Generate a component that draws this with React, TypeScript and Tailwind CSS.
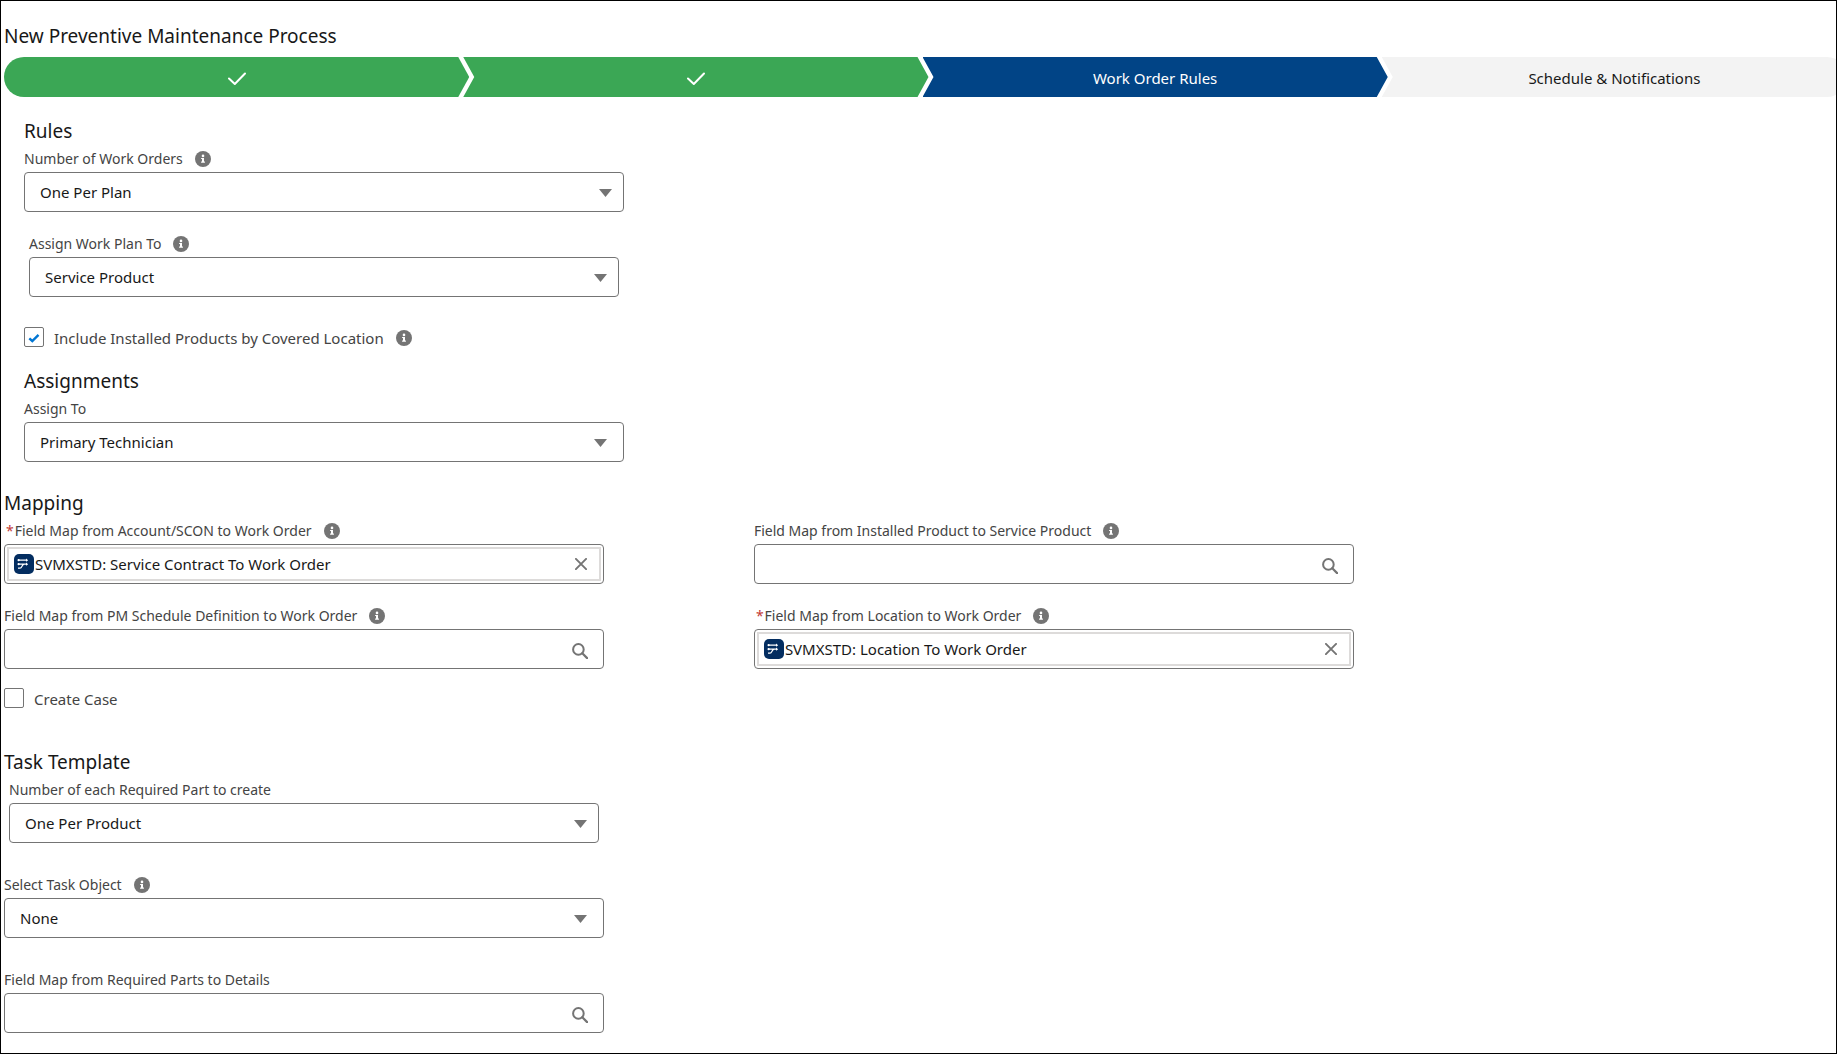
import { useId, useState } from "react";
import type { ReactNode } from "react";

const InfoIcon = () => (
  <svg viewBox="0 0 16 16" className="size-4 text-[#747474]" aria-hidden="true">
    <circle cx="8" cy="8" r="8" fill="currentColor" />
    <circle cx="8" cy="4.9" r="1.3" fill="#fff" />
    <path d="M6.1 6.9h2.9v3.6h.9v1.3H6.1v-1.3H7V8.1h-.9z" fill="#fff" />
  </svg>
);

const CheckIcon = () => (
  <svg viewBox="0 0 18 14" className="mt-0.5 h-3.5 w-[18px]" aria-hidden="true">
    <path d="M1 6.5 6.8 12 17 1.5" fill="none" stroke="#fff" strokeWidth="2" strokeLinecap="round" strokeLinejoin="round" />
  </svg>
);

const SearchIcon = () => (
  <svg viewBox="0 0 16 16" className="size-4" aria-hidden="true">
    <circle cx="6.4" cy="6.4" r="5.3" fill="none" stroke="#747474" strokeWidth="2" />
    <path d="m10.3 10.3 4.8 4.8" stroke="#747474" strokeWidth="2.2" strokeLinecap="round" />
  </svg>
);

const CloseIcon = () => (
  <svg viewBox="0 0 12 12" className="size-3" aria-hidden="true">
    <path d="m.9.9 10.2 10.2M11.1.9.9 11.1" stroke="#747474" strokeWidth="1.9" strokeLinecap="round" />
  </svg>
);

const FieldMapIcon = () => (
  <svg viewBox="0 0 20 20" className="size-5 shrink-0" aria-hidden="true">
    <rect width="20" height="20" rx="5" fill="#032d60" />
    <path d="M4 6.2h9M4 10.2h9M4 14.2h2c2.4 0 1.6-4 4.4-4" fill="none" stroke="#fff" strokeWidth="1.2" />
    <path d="m12 4.6 2.2 1.6L12 7.8zM12 8.6l2.2 1.6-2.2 1.6z" fill="#fff" />
    <circle cx="4.6" cy="6.2" r="1.1" fill="#fff" />
    <circle cx="4.6" cy="10.2" r="1.1" fill="#fff" />
  </svg>
);

// Each step overlaps the previous one by 6px, which leaves a 5px gap between the chevrons
const steps = [
  {
    label: "Process Details",
    done: true,
    className: "rounded-l-full bg-[#3ba755] [clip-path:polygon(0_0,calc(100%-11px)_0,100%_50%,calc(100%-11px)_100%,0_100%)]",
  },
  {
    label: "Plan Details",
    done: true,
    className: "bg-[#3ba755] [clip-path:polygon(0_0,calc(100%-11px)_0,100%_50%,calc(100%-11px)_100%,0_100%,11px_50%)]",
  },
  {
    label: "Work Order Rules",
    done: false,
    className: "bg-[#014486] text-white [clip-path:polygon(0_0,calc(100%-11px)_0,100%_50%,calc(100%-11px)_100%,0_100%,11px_50%)]",
  },
  {
    label: "Schedule & Notifications",
    done: false,
    className: "rounded-r-full bg-[#f3f3f3] text-[#181818] [clip-path:polygon(0_0,100%_0,100%_100%,0_100%,11px_50%)]",
  },
];

const ProgressPath = () => (
  <nav className="-mr-[11px] ml-[3px]">
    <ol className="flex">
      {steps.map((step) => (
        <li key={step.label} className="-ml-1.5 flex flex-1 first:ml-0">
          <button
            type="button"
            aria-label={step.label}
            className={`flex h-10 flex-1 items-center justify-center pt-0.5 text-[15px] ${step.className}`}
          >
            {step.done ? <CheckIcon /> : step.label}
          </button>
        </li>
      ))}
    </ol>
  </nav>
);

type FieldLabelProps = { htmlFor: string; label: string; info?: boolean; required?: boolean };

const FieldLabel = ({ htmlFor, label, info, required }: FieldLabelProps) => (
  <div className="flex h-[25px] items-center gap-3 pb-0.5 text-sm text-[#444]">
    <label htmlFor={htmlFor} className="flex gap-px">
      {required && <span className="pl-0.5 text-[#c23934]">*</span>}
      {label}
    </label>
    {info && (
      <button type="button" aria-label={`Help for ${label}`}>
        <InfoIcon />
      </button>
    )}
  </div>
);

type FieldProps = { label: string; info?: boolean; required?: boolean };

const SelectField = ({ label, info, value, arrow = "right-3" }: FieldProps & { value: string; arrow?: string }) => {
  const id = useId();
  return (
    <div>
      <FieldLabel htmlFor={id} label={label} info={info} />
      <div className="relative">
        <select
          id={id}
          defaultValue={value}
          className="block h-10 w-full appearance-none rounded border border-[#747474] bg-white px-[15px] text-[15px] text-[#181818]"
        >
          <option>{value}</option>
        </select>
        <svg viewBox="0 0 13 8" className={`pointer-events-none absolute top-[17px] h-2 w-[13px] ${arrow}`} aria-hidden="true">
          <path d="M0 0h13L6.5 8z" fill="#747474" />
        </svg>
      </div>
    </div>
  );
};

const LookupField = ({ label, info, required, value }: FieldProps & { value?: string }) => {
  const id = useId();
  const [text, setText] = useState(value ?? "");
  return (
    <div>
      <FieldLabel htmlFor={id} label={label} info={info} required={required} />
      <div className="flex h-10 rounded border border-[#747474] bg-white p-0.5">
        <div className={`flex flex-1 items-center border-2 ${value ? "border-[#dddbda] pl-[5px]" : "border-transparent pl-2"}`}>
          {value && <FieldMapIcon />}
          <input
            id={id}
            type="text"
            value={text}
            onChange={(e) => setText(e.target.value)}
            className="min-w-0 flex-1 pl-px text-[15px] text-[#181818] outline-none"
          />
          <button
            type="button"
            aria-label={value ? "Clear selection" : "Search"}
            className={value ? "pr-3" : "pt-1 pr-[11px]"}
          >
            {value ? <CloseIcon /> : <SearchIcon />}
          </button>
        </div>
      </div>
    </div>
  );
};

const CheckboxField = ({ label, info, checked }: { label: string; info?: boolean; checked?: boolean }) => {
  const id = useId();
  return (
    <div className="flex h-5 items-center text-[15px] text-[#444]">
      <div className="relative size-5">
        <input
          id={id}
          type="checkbox"
          defaultChecked={checked}
          className="peer block size-5 appearance-none rounded-xs border border-[#747474] bg-white"
        />
        <svg viewBox="0 0 20 20" className="pointer-events-none absolute inset-0 hidden peer-checked:block" aria-hidden="true">
          <path d="m5.3 11.3 3 2.7 6.2-6.2" fill="none" stroke="#0176d3" strokeWidth="2.4" />
        </svg>
      </div>
      <label htmlFor={id} className="pt-0.5 pr-3 pl-2.5">
        {label}
      </label>
      {info && (
        <button type="button" aria-label={`Help for ${label}`} className="pt-0.5">
          <InfoIcon />
        </button>
      )}
    </div>
  );
};

const SectionTitle = ({ children }: { children: ReactNode }) => (
  <h2 className="text-[19px] leading-[31px] text-[#181818]">{children}</h2>
);

// Every field column is 41% of the page, and the fields take four fifths of it
const Column = ({ children }: { children: ReactNode }) => (
  <div className="w-[41%]">
    <div className="w-4/5">{children}</div>
  </div>
);

export default function App() {
  return (
    <main className="min-h-screen overflow-hidden border border-black bg-white pb-5 font-['Noto_Sans',sans-serif]">
      <h1 className="pt-5 pl-[3px] text-[19px] leading-[31px] text-[#181818]">New Preventive Maintenance Process</h1>
      <div className="pt-[5px]">
        <ProgressPath />
      </div>

      {/* Indented, but with fields as wide as those of the sections below */}
      <section className="-mr-5 pt-[19px] pr-[3px] pl-[23px]">
        <Column>
          <SectionTitle>Rules</SectionTitle>
          <SelectField label="Number of Work Orders" info value="One Per Plan" />
          <div className="px-[5px] pt-5">
            <SelectField label="Assign Work Plan To" info value="Service Product" />
          </div>
          <div className="pt-[30px] pb-[19px]">
            <CheckboxField label="Include Installed Products by Covered Location" info checked />
          </div>
          <SectionTitle>Assignments</SectionTitle>
          <SelectField label="Assign To" value="Primary Technician" arrow="right-[17px]" />
        </Column>
      </section>

      <section className="px-[3px] pt-[26px]">
        <SectionTitle>Mapping</SectionTitle>
        <div className="flex">
          <Column>
            <LookupField label="Field Map from Account/SCON to Work Order" info required value="SVMXSTD: Service Contract To Work Order" />
          </Column>
          <Column>
            <LookupField label="Field Map from Installed Product to Service Product" info />
          </Column>
        </div>
        <div className="flex pt-5">
          <Column>
            <LookupField label="Field Map from PM Schedule Definition to Work Order" info />
          </Column>
          <Column>
            <LookupField label="Field Map from Location to Work Order" info required value="SVMXSTD: Location To Work Order" />
          </Column>
        </div>
        <div className="pt-[19px]">
          <CheckboxField label="Create Case" />
        </div>
      </section>

      <section className="px-[3px] pt-[39px]">
        <SectionTitle>Task Template</SectionTitle>
        <Column>
          <div className="px-[5px]">
            <SelectField label="Number of each Required Part to create" value="One Per Product" />
          </div>
          <div className="pt-[30px]">
            <SelectField label="Select Task Object" info value="None" arrow="right-[17px]" />
          </div>
          <div className="pt-[30px]">
            <LookupField label="Field Map from Required Parts to Details" />
          </div>
        </Column>
      </section>
    </main>
  );
}
